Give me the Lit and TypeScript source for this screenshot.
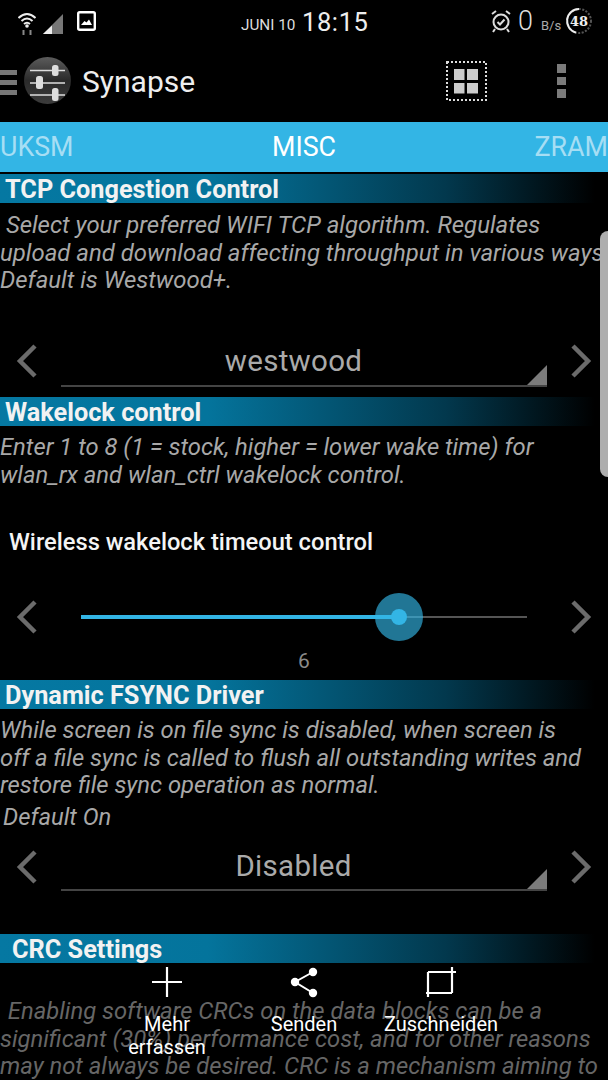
import { LitElement, html, css } from "lit";
import { customElement } from "lit/decorators.js";

const chevL = html`<svg class="chev" width="22" height="36" viewBox="0 0 22 36"><path d="M19 3 L4 18 L19 33" fill="none" stroke="#6b6b6b" stroke-width="4.5"/></svg>`;
const chevR = html`<svg class="chev" width="22" height="36" viewBox="0 0 22 36"><path d="M3 3 L18 18 L3 33" fill="none" stroke="#6b6b6b" stroke-width="4.5"/></svg>`;

@customElement("app-root")
export class AppRoot extends LitElement {
  static styles = css`
    :host { display: block; width: 608px; height: 1080px; position: relative; overflow: hidden; background: #000; font-family: Roboto, "Liberation Sans", sans-serif; color: #fff; }
    .status { height: 44px; display: flex; align-items: center; box-sizing: border-box; padding-left: 18px; }
    .status .l { display: flex; align-items: flex-start; width: 223px; height: 30px; margin-top: 0; }
    .wifi { margin-top: 0; }
    .signal { margin-left: 7px; }
    .pic { margin-left: 14px; margin-top: 4px; }
    .date { font-size: 15.3px; color: #ddd; margin-top: 6px; width: 61px; white-space: nowrap; }
    .time { font-size: 25.5px; color: #eee; width: 189px; letter-spacing: .6px; margin-top: -1px; white-space: nowrap; }
    .status .r { display: flex; align-items: center; margin-top: -3px; }
    .zero { font-size: 27px; font-weight: 300; color: #ddd; margin-left: 7px; }
    .bs { font-size: 13px; color: #aaa; margin: 9px 4px 0 8px; }
    .action { height: 78px; display: flex; align-items: center; }
    .burger { display: flex; flex-direction: column; gap: 5px; width: 17px; margin-right: 7px; margin-top: -1px; }
    .burger i { display: block; height: 5px; width: 17px; background: #777; }
    .logo { margin-top: -6px; flex: none; }
    .app { font-size: 30px; margin-left: 11px; margin-top: -3px; color: #eee; width: 364px; }
    .grid { margin-top: -4px; margin-left: 0; flex: none; }
    .dots { display: flex; flex-direction: column; gap: 4px; margin-left: 69px; margin-top: -4px; }
    .dots i { display: block; width: 9px; height: 8.5px; background: #7b7b7b; }
    .tabs { height: 50px; background: #33b5e5; display: flex; justify-content: space-between; align-items: center; font-size: 26.8px; }
    .tabs span { color: #a6def4; }
    .tabs b { font-weight: 400; color: #fff; }
    .content { padding-top: 2px; }
    .hd { height: 29px; line-height: 31px; width: 595px; font-size: 25.3px; font-weight: 700; padding-left: 5px; box-sizing: border-box; background: linear-gradient(90deg, #0578a2 0%, #04749c 35%, #02384d 75%, #000 100%); color: #f2f2f2; white-space: nowrap; overflow: hidden; }
    .hd.in { padding-left: 12px; margin-top: 44px; }
    .hd.wake { margin-top: 11px; }
    .d { font-size: 23.8px; font-style: italic; font-weight: 400; line-height: 27.5px; color: #a8a8a8; white-space: nowrap; padding-top: 8px; }
    .d.dim { color: #666; padding-top: 35px; text-indent: 2px; }
    .d.first { padding-top: 9px; height: 82px; font-size: 23.95px; }
    .d.def { padding-top: 4px; padding-left: 3px; }
    .spin { display: flex; align-items: center; height: 46px; margin-left: 16px; width: 576px; justify-content: space-between; margin-top: 13px; }
    .spin.top { margin-top: 46px; }
    .spin.top .chev { margin-top: -4px; }
    .spin.top .sp { line-height: 41px; }
    .chev { flex: none; }
    .sp { position: relative; width: 486px; height: 46px; padding-right: 21px; border-bottom: 2px solid #444; box-sizing: border-box; text-align: center; font-size: 29.5px; line-height: 43px; color: #aaa; margin-top: 1px; letter-spacing: .3px; }
    .sp::after { content: ""; position: absolute; right: 0; bottom: 0; border-style: solid; border-width: 0 0 20px 20px; border-color: transparent transparent #7b7b7b transparent; }
    .title { font-size: 23.7px; font-weight: 500; color: #f4f4f4; padding-left: 9px; line-height: 28px; margin-top: 39px; }
    .slider { display: flex; align-items: center; height: 60px; margin: 31px 0 0 16px; width: 576px; justify-content: space-between; }
    .track { position: relative; width: 446px; height: 2px; background: #555; }
    .fill { height: 4px; position: relative; top: -1px; background: #33b5e5; }
    .halo { position: absolute; width: 48px; height: 48px; top: -23px; border-radius: 50%; background: rgba(51, 181, 229, .65); display: flex; align-items: center; justify-content: center; }
    .dot { width: 16px; height: 16px; border-radius: 50%; background: #33b5e5; }
    .val { text-align: center; font-size: 21px; color: #8a8a8a; line-height: 24px; margin-top: 2px; margin-bottom: 7px; }
    .scroll { position: absolute; right: 0; top: 231px; width: 8px; height: 246px; border-radius: 8px 0 0 8px; background: #aeaeae; }
    .bar { position: absolute; left: 0; right: 0; top: 966px; }
    .item { position: absolute; top: 0; width: 140px; display: flex; flex-direction: column; align-items: center; text-align: center; font-size: 20px; line-height: 23px; color: #fff; }
    .item svg { margin-bottom: 14.5px; }
    .i1 { left: 97px; } .i2 { left: 234px; } .i3 { left: 371px; }
  `;

  render() {
    const pos = 319;
    const haloLeft = pos - 25;
    return html`
      <div class="status">
        <div class="l">
          <svg class="wifi" width="18" height="28" viewBox="0 0 18 28"><g fill="none" stroke="#eee" stroke-width="2"><path d="M0.5 11 Q9 3 17.5 11"/><path d="M3.5 14 Q9 9 14.5 14"/><path d="M6 17 Q9 14.5 12 17"/></g><circle cx="9" cy="19" r="1.8" fill="#eee"/><path d="M5.5 23v5M12.5 23v5" stroke="#888" stroke-width="2"/></svg>
          <svg class="signal" width="20" height="27" viewBox="0 0 20 27"><path d="M20 7V27H0Z" fill="#777"/><path d="M9 18.5V27H0Z" fill="#eee"/></svg>
          <svg class="pic" width="19" height="20" viewBox="0 0 19 20"><rect x="1.2" y="1.2" width="16.6" height="17.6" rx="1.5" fill="#000" stroke="#fff" stroke-width="2.4"/><path d="M4 14 L7.5 10 L9.5 11.5 L12 8.5 L15 14Z" fill="#fff"/></svg>
        </div>
        <div class="date">JUNI 10</div>
        <div class="time">18:15</div>
        <div class="r">
          <svg width="20" height="24" viewBox="0 0 20 24"><circle cx="10" cy="13" r="7.5" fill="none" stroke="#ddd" stroke-width="2"/><path d="M6.5 13l2.5 2.5 4.5-5" fill="none" stroke="#ddd" stroke-width="2"/><path d="M1 5 L5 2 M19 5 L15 2 M4 20l-2 3M16 20l2 3" stroke="#ddd" stroke-width="2"/></svg>
          <span class="zero">0</span><span class="bs">B/s</span>
          <svg width="28" height="28" viewBox="0 0 28 28"><circle cx="14" cy="14" r="12" fill="none" stroke="#555" stroke-width="2" stroke-dasharray="2 1.5"/><path d="M14 2 A12 12 0 0 0 11 25.6" fill="none" stroke="#eee" stroke-width="2"/><text x="14" y="19" text-anchor="middle" font-family="'DejaVu Serif','Liberation Serif',serif" font-weight="700" font-size="13" fill="#eee">48</text></svg>
        </div>
      </div>
      <div class="action">
        <div class="burger"><i></i><i></i><i></i></div>
        <svg class="logo" width="47" height="47" viewBox="0 0 47 47">
          <defs><linearGradient id="g" x1="0" y1="0" x2="0" y2="1"><stop offset="0" stop-color="#5c5c5c"/><stop offset=".5" stop-color="#2a2a2a"/><stop offset="1" stop-color="#3c3c3c"/></linearGradient></defs>
          <circle cx="23.5" cy="23.5" r="23.5" fill="url(#g)"/>
          <path d="M6 13.5H41M6 26H41M6 38H41" stroke="#ddd" stroke-width="1.6"/>
          <rect x="28" y="8" width="6.5" height="11" rx="2.5" fill="#ddd"/><rect x="12" y="19" width="7" height="13" rx="2.5" fill="#ddd"/><rect x="28" y="31" width="6.5" height="13" rx="2.5" fill="#ddd"/>
        </svg>
        <div class="app">Synapse</div>
        <svg class="grid" width="42" height="41" viewBox="0 0 42 41"><rect x="1" y="1" width="39" height="38" fill="none" stroke="#ddd" stroke-width="2" stroke-dasharray="2 2"/><g fill="#ccc"><rect x="8" y="8" width="10.5" height="11"/><rect x="21" y="8" width="11" height="11"/><rect x="8" y="22" width="10.5" height="10.5"/><rect x="21" y="22" width="11" height="10.5"/></g></svg>
        <div class="dots"><i></i><i></i><i></i></div>
      </div>
      <div class="tabs"><span>UKSM</span><b>MISC</b><span>ZRAM</span></div>
      <div class="content">
        <div class="hd">TCP Congestion Control</div>
        <div class="d first">&nbsp;Select your preferred WIFI TCP algorithm. Regulates<br>upload and download affecting throughput in various ways.<br>Default is Westwood+.</div>
        <div class="spin top">${chevL}<div class="sp">westwood</div>${chevR}</div>
        <div class="hd wake">Wakelock control</div>
        <div class="d">Enter 1 to 8 (1 = stock, higher = lower wake time) for<br>wlan_rx and wlan_ctrl wakelock control.</div>
        <div class="title">Wireless wakelock timeout control</div>
        <div class="slider">${chevL}
          <div class="track"><div class="fill" style="width:${pos}px"></div><div class="halo" style="left:${haloLeft}px"><div class="dot"></div></div></div>
        ${chevR}</div>
        <div class="val">6</div>
        <div class="hd">Dynamic FSYNC Driver</div>
        <div class="d">While screen is on file sync is disabled, when screen is<br>off a file sync is called to flush all outstanding writes and<br>restore file sync operation as normal.</div>
        <div class="d def">Default On</div>
        <div class="spin">${chevL}<div class="sp">Disabled</div>${chevR}</div>
        <div class="hd in">CRC Settings</div>
        <div class="d dim">&nbsp;Enabling software CRCs on the data blocks can be a<br>significant (30%) performance cost, and for other reasons<br>may not always be desired. CRC is a mechanism aiming to</div>
      </div>
      <div class="scroll"></div>
      <div class="bar">
        <div class="item i1"><svg width="32" height="32" viewBox="0 0 32 32"><path d="M16 1V31M1 16H31" stroke="#fff" stroke-width="2.2"/></svg>Mehr<br>erfassen</div>
        <div class="item i2"><svg width="32" height="32" viewBox="0 0 32 32"><path d="M25 6 L7 16 L25 27" fill="none" stroke="#fff" stroke-width="2"/><circle cx="25" cy="6" r="4.2" fill="#fff"/><circle cx="7" cy="16" r="4.2" fill="#fff"/><circle cx="25" cy="27" r="4.2" fill="#fff"/></svg>Senden</div>
        <div class="item i3"><svg width="32" height="32" viewBox="0 0 32 32"><path d="M3 6H31M1 27H27M27 1V27M3 6V31" fill="none" stroke="#fff" stroke-width="2.2"/></svg>Zuschneiden</div>
      </div>
    `;
  }
}
